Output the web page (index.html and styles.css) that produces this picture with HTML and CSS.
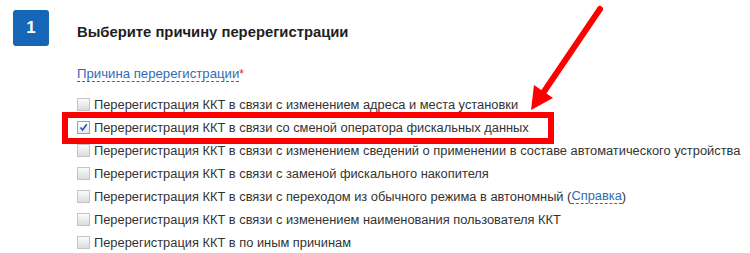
FILE: index.html
```html
<!DOCTYPE html>
<html lang="ru">
<head>
    <meta charset="UTF-8">
    <title>Перерегистрация ККТ</title>
    <link rel="stylesheet" href="styles.css">
</head>
<body>
    <div class="step">
        <div class="step-num">1</div>
        <div class="step-body">
            <h2 class="step-title">Выберите причину перерегистрации</h2>
            <div class="field-label"><span class="hint">Причина перерегистрации</span><span class="req">*</span></div>
            <ul class="reasons">
                <li><span class="cb"></span>Перерегистрация ККТ в связи с изменением адреса и места установки</li>
                <li><span class="cb checked"><svg viewBox="0 0 11 11" width="11" height="11"><path d="M2.5 5.5 L4.6 8 L8.8 2.2" fill="none" stroke="#2b4fa8" stroke-width="1.6"/></svg></span>Перерегистрация ККТ в связи со сменой оператора фискальных данных</li>
                <li><span class="cb"></span>Перерегистрация ККТ в связи с изменением сведений о применении в составе автоматического устройства</li>
                <li><span class="cb"></span>Перерегистрация ККТ в связи с заменой фискального накопителя</li>
                <li><span class="cb"></span>Перерегистрация ККТ в связи с переходом из обычного режима в автономный (<span class="hint">Справка</span>)</li>
                <li><span class="cb"></span>Перерегистрация ККТ в связи с изменением наименования пользователя ККТ</li>
                <li><span class="cb"></span>Перерегистрация ККТ в по иным причинам</li>
            </ul>
        </div>
    </div>

    <!-- пометки поверх скриншота -->
    <div class="mark-box"></div>
    <svg class="mark-arrow" width="750" height="253" viewBox="0 0 750 253">
        <line x1="600" y1="9" x2="541" y2="96" stroke="#f00" stroke-width="6" stroke-linecap="round"/>
        <polygon points="531,110 534,85 553,98" fill="#f00"/>
    </svg>
</body>
</html>
```

FILE: styles.css
```css
body {
    margin: 0;
    background: #fff;
    font-family: "Liberation Sans", Arial, sans-serif;
    color: #333;
}
.step {
    display: flex;
    gap: 28px;
    padding: 10px 0 0 13px;
}
.step-num {
    flex: none;
    width: 36px;
    height: 36px;
    border-radius: 3px;
    background-color: #1566b7;
    color: #fff;
    font-weight: bold;
    font-size: 17px;
    line-height: 36px;
    text-align: center;
}
.step-title {
    margin: 12px 0 0 0;
    font-size: 14.8px;
    line-height: 20px;
    font-weight: bold;
    color: #1e1e1e;
}
.field-label {
    margin-top: 23px;
    font-size: 13.2px;
    line-height: 18px;
}
.hint {
    color: #2f6db3;
    border-bottom: 1px dashed #2f6db3;
}
.req {
    color: #e0262b;
    font-size: 12px;
    vertical-align: top;
}
.reasons {
    list-style: none;
    margin: 10px 0 0 0;
    padding: 0;
    font-size: 12.85px;
    line-height: 23px;
    white-space: nowrap;
}
.reasons li {
    display: flex;
    align-items: center;
}
.reasons .hint {
    line-height: 14px;
}
.cb {
    flex: none;
    width: 11px;
    height: 11px;
    margin-right: 4px;
    border: 1px solid #c4c4c4;
    background: linear-gradient(#fbfbfb, #dcdcdc);
    display: flex;
}
.cb.checked {
    border-color: #9aa3b5;
    background: linear-gradient(#ffffff, #e6e8ee);
}
.mark-box {
    position: absolute;
    left: 62px;
    top: 112px;
    width: 492px;
    height: 32px;
    box-sizing: border-box;
    border: 6px solid #f00;
}
.mark-arrow {
    position: absolute;
    left: 0;
    top: 0;
}
```
